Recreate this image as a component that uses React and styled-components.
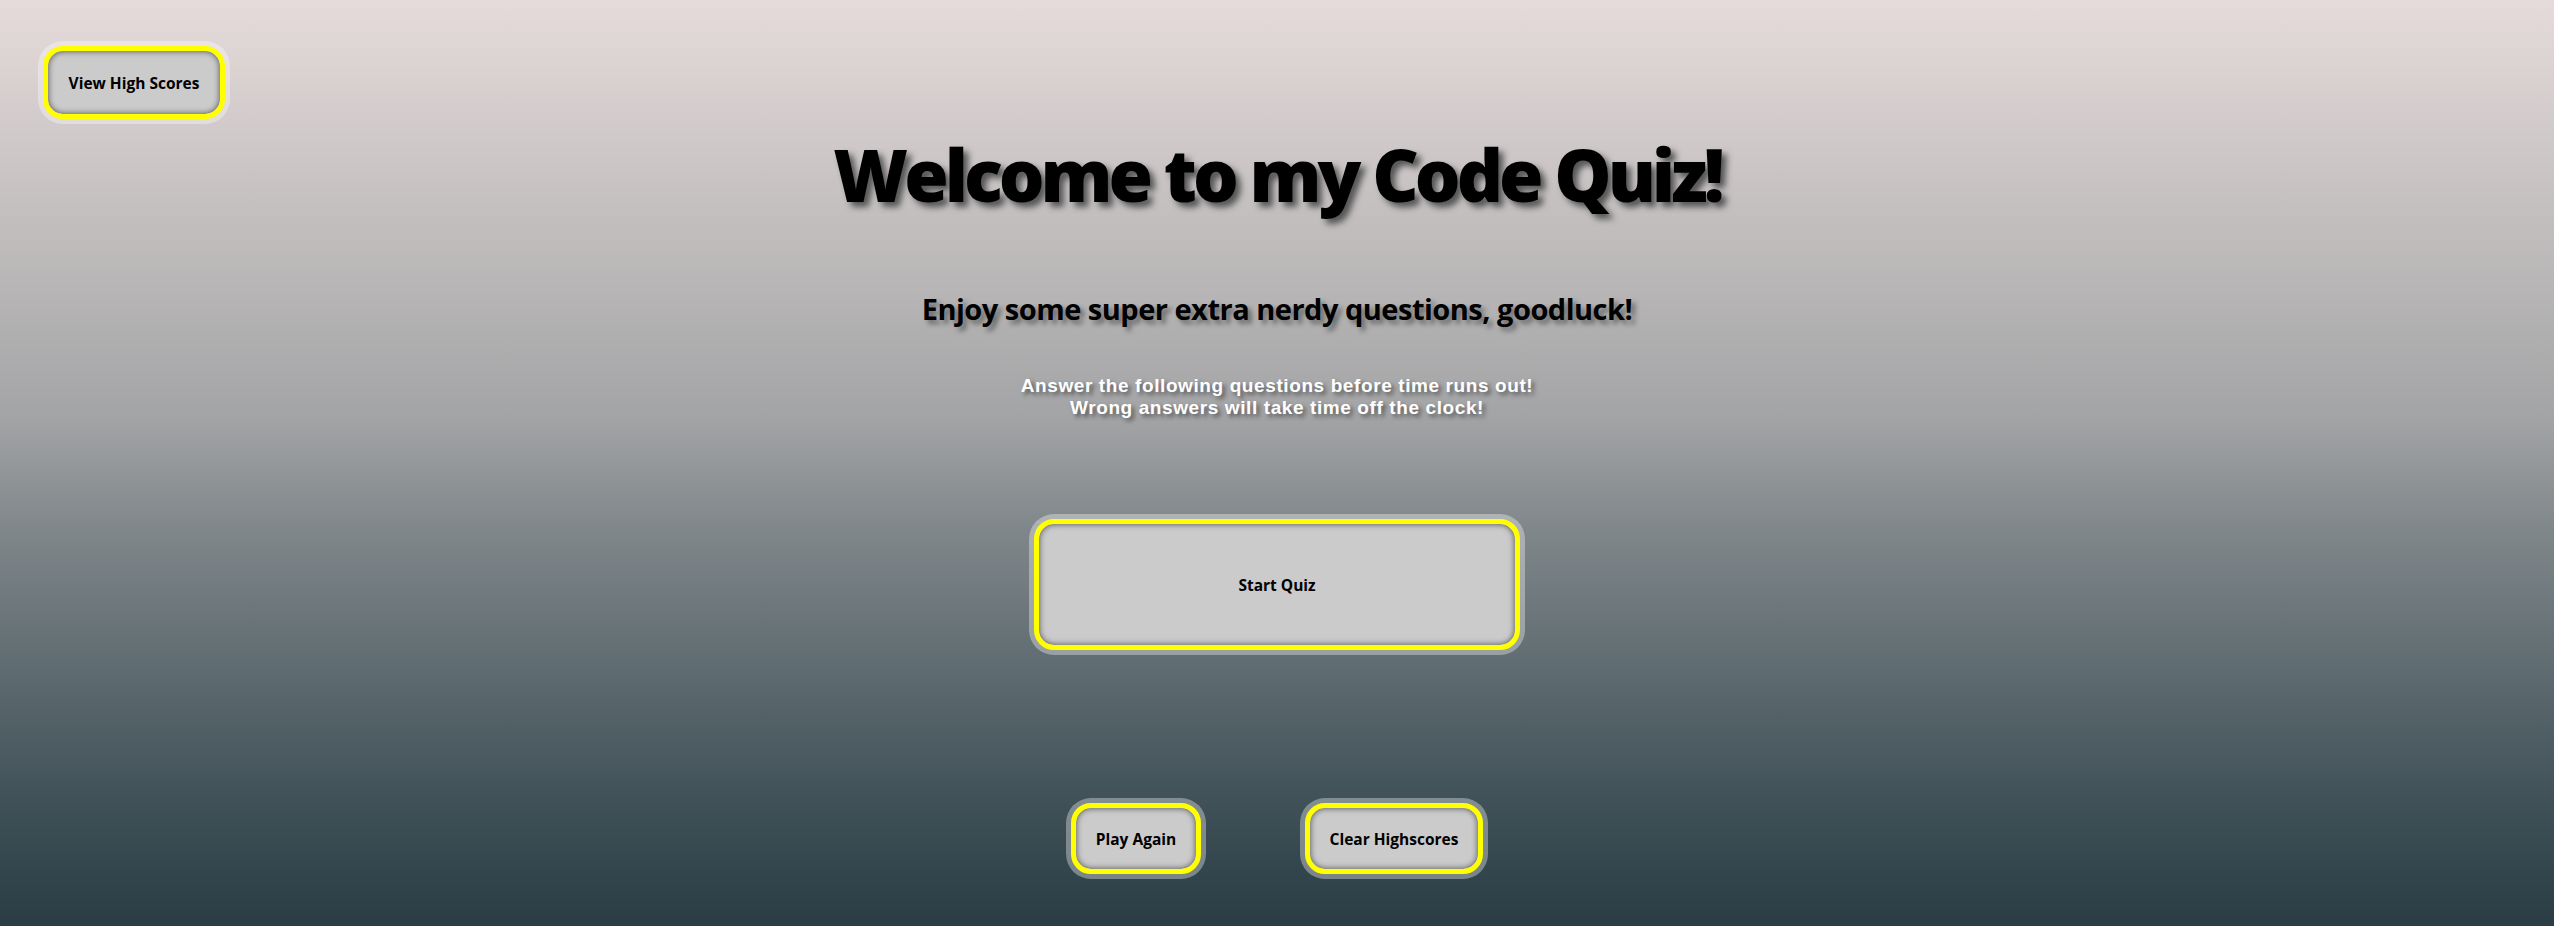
import { createGlobalStyle } from 'styled-components';
import styled from 'styled-components';

const GlobalStyle = createGlobalStyle`
  html, body {
    margin: 0;
    padding: 0;
  }
  body {
    font-family: "Open Sans", "Liberation Sans", sans-serif;
  }
`

const Page = styled.div`
  height: 100vh;
  min-height: 926px;
  box-sizing: border-box;
  padding: 46px 43px 0;
  background: linear-gradient(to bottom,
    #e6dbdb 0%,
    #c2bebe 24%,
    #a3a4a6 45%,
    #80878a 57%,
    #5d6a6f 73%,
    #3f5057 87%,
    #2a3d44 100%);
  display: flex;
  flex-direction: column;
`

const TopBar = styled.header`
  display: flex;
  height: 73px;
`

const Main = styled.main`
  display: flex;
  flex-direction: column;
  align-items: center;
  text-align: center;
`

const Title = styled.h1`
  margin: 6px 0 0;
  font-size: 72px;
  font-weight: 800;
  letter-spacing: -4px;
  color: #000;
  text-shadow: 5px 5px 6px #555;
`

const Subtitle = styled.h2`
  margin: 66px 0 0;
  font-size: 29px;
  font-weight: 700;
  letter-spacing: -0.5px;
  color: #000;
  text-shadow: 4px 4px 5px #666;
`

const Rules = styled.p`
  margin: 47px 0 0;
  font-family: "Liberation Sans", Arial, sans-serif;
  font-size: 19px;
  line-height: 22px;
  font-weight: 700;
  letter-spacing: 0.6px;
  color: #fff;
  text-shadow: 3px 3px 4px #555;
`

const Button = styled.button`
  box-sizing: border-box;
  font-family: "Open Sans", "Liberation Sans", sans-serif;
  font-size: 15.5px;
  font-weight: 700;
  color: #000;
  background: #cbcbcb;
  border: 5px solid #ffff00;
  border-radius: 20px;
  box-shadow: 0 0 0 5px rgba(255, 255, 255, 0.35), inset 0 0 6px rgba(0, 0, 0, 0.65);
  width: ${p => p.$w}px;
  height: ${p => p.$h}px;
  padding: 0;
  cursor: pointer;
`

const StartWrap = styled.div`
  margin-top: 100px;
`

const BottomRow = styled.div`
  display: flex;
  gap: 104px;
  margin-top: 153px;
`

export default function App() {
  return (
    <>
      <GlobalStyle />
      <Page>
        <TopBar>
          <Button $w={182} $h={73}>View High Scores</Button>
        </TopBar>
        <Main>
          <Title>Welcome to my Code Quiz!</Title>
          <Subtitle>Enjoy some super extra nerdy questions, goodluck!</Subtitle>
          <Rules>
            Answer the following questions before time runs out!<br />
            Wrong answers will take time off the clock!
          </Rules>
          <StartWrap>
            <Button $w={486} $h={131}>Start Quiz</Button>
          </StartWrap>
          <BottomRow>
            <Button $w={130} $h={71}>Play Again</Button>
            <Button $w={178} $h={71}>Clear Highscores</Button>
          </BottomRow>
        </Main>
      </Page>
    </>
  );
}
